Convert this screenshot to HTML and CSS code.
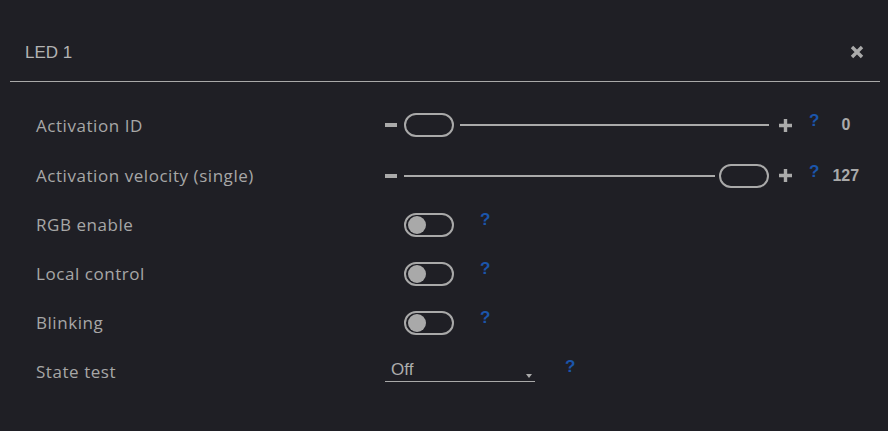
FILE: index.html
```html
<!DOCTYPE html>
<html>
<head>
<meta charset="utf-8">
<link rel="stylesheet" href="styles.css">
</head>
<body>
<div class="dialog">
  <div class="header">
    <span class="title">LED 1</span>
    <svg class="close" width="14" height="14" viewBox="0 0 14 14"><path d="M2 2 L12 12 M12 2 L2 12" stroke="#aaaaaa" stroke-width="3.4" stroke-linecap="butt"/></svg>
  </div>
  <div class="divider"></div>
  <div class="rows">
    <div class="row">
      <div class="label">Activation ID</div>
      <div class="ctrl slider">
        <span class="minus"></span>
        <div class="track">
          <span class="thumb"></span><span class="line gap-l"></span>
        </div>
        <svg class="plus" width="13" height="13" viewBox="0 0 13 13"><path d="M6.5 0 V13 M0 6.5 H13" stroke="#aaaaaa" stroke-width="3.4"/></svg>
        <span class="help help-s">?</span>
        <span class="value v0">0</span>
      </div>
    </div>
    <div class="row">
      <div class="label">Activation velocity (single)</div>
      <div class="ctrl slider">
        <span class="minus"></span>
        <div class="track">
          <span class="line gap-r"></span><span class="thumb"></span>
        </div>
        <svg class="plus" width="13" height="13" viewBox="0 0 13 13"><path d="M6.5 0 V13 M0 6.5 H13" stroke="#aaaaaa" stroke-width="3.4"/></svg>
        <span class="help help-s">?</span>
        <span class="value v127">127</span>
      </div>
    </div>
    <div class="row">
      <div class="label">RGB enable</div>
      <div class="ctrl">
        <span class="toggle"><span class="knob"></span></span>
        <span class="help help-t">?</span>
      </div>
    </div>
    <div class="row">
      <div class="label">Local control</div>
      <div class="ctrl">
        <span class="toggle"><span class="knob"></span></span>
        <span class="help help-t">?</span>
      </div>
    </div>
    <div class="row">
      <div class="label">Blinking</div>
      <div class="ctrl">
        <span class="toggle"><span class="knob"></span></span>
        <span class="help help-t">?</span>
      </div>
    </div>
    <div class="row">
      <div class="label">State test</div>
      <div class="ctrl">
        <div class="select"><span class="sel-text">Off</span><span class="arrow"></span></div>
        <span class="help help-sel">?</span>
      </div>
    </div>
  </div>
</div>
</body>
</html>
```
FILE: styles.css
```css
html, body {
  margin: 0;
  padding: 0;
  background: #1f1f25;
}
body {
  width: 888px;
  height: 431px;
  overflow: hidden;
  font-family: "Liberation Sans", Arial, sans-serif;
}
.dialog {
  display: flex;
  flex-direction: column;
}
.header {
  height: 81px;
  display: flex;
  align-items: center;
  justify-content: space-between;
  padding: 22px 24px 0 25px;
  box-sizing: border-box;
}
.title {
  color: #b3b3b3;
  font-size: 17px;
  position: relative;
  top: 1px;
}
.close {
  display: block;
}
.divider {
  height: 1px;
  background: #a9a9a9;
  margin: 0 8px 0 10px;
}
.rows {
  padding-top: 17px;
  display: flex;
  flex-direction: column;
}
.row {
  display: grid;
  grid-template-columns: 349px auto;
  align-items: center;
  height: 49px;
  padding-left: 36px;
}
.row:nth-child(1) { height: 52px; }
.label {
  font-family: "Open Sans", sans-serif;
  font-size: 17px;
  color: #a7a7a7;
  letter-spacing: 0.55px;
}
.ctrl {
  display: flex;
  align-items: center;
}
.minus {
  display: block;
  width: 12px;
  height: 4px;
  background: #aaaaaa;
  margin-right: 7px;
}
.track {
  width: 365px;
  display: flex;
  align-items: center;
}
.thumb {
  display: block;
  width: 50px;
  height: 24px;
  box-sizing: border-box;
  border: 2px solid #a9a9a9;
  border-radius: 12px;
  flex: none;
}
.line {
  display: block;
  height: 2px;
  background: #aaaaaa;
  flex: 1;
}
.gap-l { margin-left: 6px; }
.gap-r { margin-right: 4px; }
.plus {
  display: block;
  margin-left: 10px;
}
.help {
  font-family: "Liberation Sans", Arial, sans-serif;
  font-weight: bold;
  font-size: 17px;
  color: #1b55ab;
  position: relative;
  top: -4px;
}
.help-s { margin-left: 17px; }
.help-t { margin-left: 26px; top: -5px; }
.help-sel { margin-left: 30px; top: -5px; }
.value {
  font-weight: bold;
  font-size: 16px;
  color: #a9a9a9;
}
.v0 { margin-left: 22px; }
.v127 { margin-left: 13px; }
.toggle {
  display: flex;
  align-items: center;
  width: 50px;
  height: 24px;
  box-sizing: border-box;
  border: 2px solid #a9a9a9;
  border-radius: 12px;
  padding-left: 2px;
  margin-left: 19px;
}
.knob {
  display: block;
  width: 18px;
  height: 18px;
  border-radius: 50%;
  background: #a9a9a9;
}
.select {
  width: 150px;
  height: 21px;
  box-sizing: border-box;
  border-bottom: 1px solid #a9a9a9;
  display: flex;
  align-items: flex-end;
  justify-content: space-between;
  padding: 0 3px 2px 6px;
}
.sel-text {
  font-size: 17px;
  color: #adadad;
  line-height: 20px;
  position: relative;
  top: 1px;
}
.arrow {
  width: 0;
  height: 0;
  border-left: 3px solid transparent;
  border-right: 3px solid transparent;
  border-top: 4px solid #aaaaaa;
  margin-bottom: 1px;
}
```
